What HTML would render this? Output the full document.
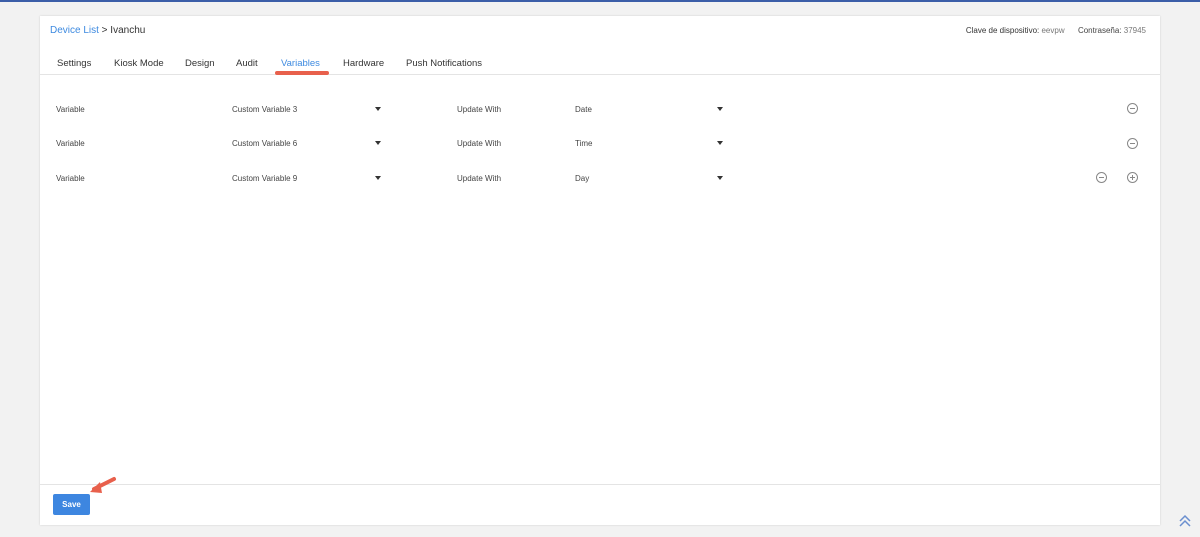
<!DOCTYPE html>
<html><head><style>
*{margin:0;padding:0;box-sizing:border-box}
body{width:1200px;height:537px;background:#f2f2f2;font-family:"Liberation Sans",sans-serif;position:relative;overflow:hidden;color:#333}
.top{position:absolute;left:0;top:0;width:1200px;height:2px;background:#3b5ea8}
.card{position:absolute;left:40px;top:16px;width:1120px;height:509px;background:#fff;box-shadow:0 0 2px rgba(0,0,0,.15)}
.a{position:absolute;white-space:nowrap}
.bc{left:10px;top:9px;font-size:10px}
.bc span{color:#3d8ae0}
.info{right:14px;top:10px;font-size:8px;color:#444}
.info i{font-style:normal;color:#777}
.tab{top:42px;font-size:9.5px;color:#333}
.hr{position:absolute;left:0;width:1120px;height:1px;background:#e4e4e4}
.r{font-size:8px;color:#444}
.car{position:absolute;width:0;height:0;border-left:3px solid transparent;border-right:3px solid transparent;border-top:4px solid #333}
.ic{position:absolute;width:11px;height:11px;border:1px solid #888;border-radius:50%}
.ic:before{content:"";position:absolute;left:2px;top:4px;width:5px;height:1px;background:#888}
.ic.p:after{content:"";position:absolute;left:4px;top:2px;width:1px;height:5px;background:#888}
</style></head><body>
<div class="top"></div>
<div class="card">
<div class="a bc"><span>Device List</span> &gt; Ivanchu</div>
<div class="a info"><b style="font-weight:normal;color:#333">Clave de dispositivo:</b> <i>eevpw</i> &nbsp;&nbsp;&nbsp;&nbsp; Contraseña: <i>37945</i></div>
<div class="a tab" style="left:17px">Settings</div>
<div class="a tab" style="left:74px">Kiosk Mode</div>
<div class="a tab" style="left:145px">Design</div>
<div class="a tab" style="left:196px">Audit</div>
<div class="a tab" style="left:241px;color:#3d8ae0">Variables</div>
<div class="a tab" style="left:303px">Hardware</div>
<div class="a tab" style="left:366px">Push Notifications</div>
<div class="hr" style="top:58px"></div>
<div class="a" style="left:235px;top:55px;width:54px;height:4px;border-radius:2px;background:#e8604c"></div>

<div class="a r" style="left:16px;top:89px">Variable</div><div class="a r" style="left:192px;top:89px">Custom Variable 3</div><div class="car" style="left:335px;top:91px"></div><div class="a r" style="left:417px;top:89px">Update With</div><div class="a r" style="left:535px;top:89px">Date</div><div class="car" style="left:677px;top:91px"></div><div class="ic" style="left:1087px;top:87px"></div>
<div class="a r" style="left:16px;top:123px">Variable</div><div class="a r" style="left:192px;top:123px">Custom Variable 6</div><div class="car" style="left:335px;top:125px"></div><div class="a r" style="left:417px;top:123px">Update With</div><div class="a r" style="left:535px;top:123px">Time</div><div class="car" style="left:677px;top:125px"></div><div class="ic" style="left:1087px;top:122px"></div>
<div class="a r" style="left:16px;top:158px">Variable</div><div class="a r" style="left:192px;top:158px">Custom Variable 9</div><div class="car" style="left:335px;top:160px"></div><div class="a r" style="left:417px;top:158px">Update With</div><div class="a r" style="left:535px;top:158px">Day</div><div class="car" style="left:677px;top:160px"></div><div class="ic" style="left:1056px;top:156px"></div><div class="ic p" style="left:1087px;top:156px"></div>

<div class="hr" style="top:468px"></div>
<div class="a" style="left:13px;top:478px;width:37px;height:21px;background:#3d86e0;border-radius:2px;color:#fff;font-size:8px;font-weight:bold;text-align:center;line-height:21px">Save</div>
<svg class="a" style="left:48px;top:460px" width="30" height="22"><path d="M26 3 L6 13" stroke="#e8604c" stroke-width="4" stroke-linecap="round"/><path d="M2 16 L12 6 L14 17 Z" fill="#e8604c"/></svg>
</div>
<svg class="a" style="left:1178px;top:514px" width="14" height="14"><path d="M2 7 L7 2 L12 7 M2 12 L7 7 L12 12" fill="none" stroke="#6b8fcf" stroke-width="1.5"/></svg>
</body></html>
